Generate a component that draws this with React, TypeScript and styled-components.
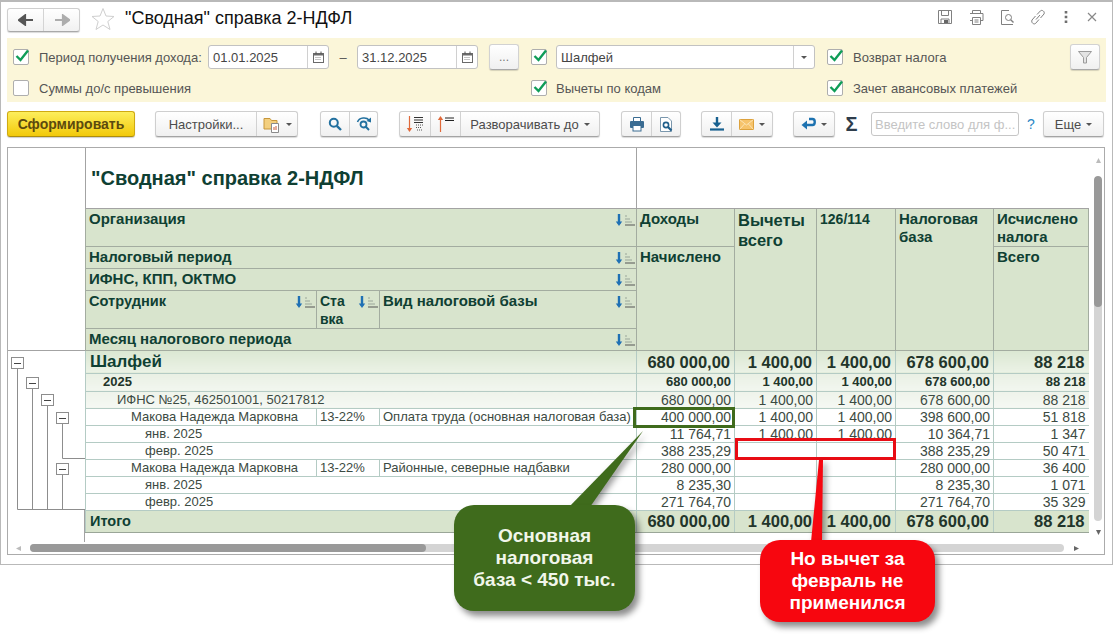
import * as React from "react";
import { FC, ReactNode } from "react";
import styled, { createGlobalStyle } from "styled-components";

const Global = createGlobalStyle`
  html, body { margin: 0; padding: 0; background: #fff; }
  body { font-family: "Liberation Sans", Arial, sans-serif; }
  * { box-sizing: border-box; }
`;

const Page = styled.div`
  position: relative;
  width: 1113px;
  height: 637px;
  overflow: hidden;
`;

const Window = styled.div`
  height: 565px;
  border: 1px solid #b9b9b9;
  border-top-width: 2px;
  padding: 0 6px;
`;

/* title bar */

const TitleBar = styled.div`
  display: flex;
  align-items: center;
  height: 36px;
  padding-bottom: 4px;
`;

const NavGroup = styled.div`
  display: flex;
  width: 73px;
  height: 24px;
  margin-top: 3px;
  background: linear-gradient(#ffffff, #f1f1f1);
  border: 1px solid #cfcfcf;
  border-bottom-color: #a9a9a9;
  border-radius: 3px;
  box-shadow: 0 1px 1px rgba(0, 0, 0, 0.15);
`;

const NavButton = styled.div`
  display: flex;
  align-items: center;
  justify-content: center;
  flex: 1;
  & + & { border-left: 1px solid #d4d4d4; }
`;

const StarBox = styled.div`
  display: flex;
  margin: 2px 10px 0 11px;
`;

const Title = styled.h1`
  margin: 0;
  font-size: 18px;
  font-weight: normal;
  color: #111;
  white-space: nowrap;
`;

const WindowTools = styled.div`
  display: flex;
  align-items: center;
  margin: 0 7px 2px auto;
  gap: 13px;
`;

/* filter panel */

const FilterPanel = styled.div`
  display: grid;
  grid-template-columns: 518px 296px 1fr;
  grid-template-rows: 26px 26px;
  row-gap: 5px;
  height: 64px;
  padding: 6px 6px 1px;
  background: #fbf6d9;
  font-size: 13px;
  color: #555;
`;

const FilterCell = styled.div`
  display: flex;
  align-items: center;
  white-space: nowrap;
`;

const CheckBoxBox = styled.span`
  display: flex;
  align-items: center;
  justify-content: center;
  flex: none;
  width: 16px;
  height: 16px;
  margin-right: 10px;
  background: #fff;
  border: 1px solid #aeaeae;
  border-radius: 2px;
`;

const CheckMark = styled.svg`
  margin-top: -3px;
  margin-right: -2px;
`;

const CheckBox: FC<{ checked?: boolean }> = ({ checked }) => (
  <CheckBoxBox>
    {checked && (
      <CheckMark width="16" height="16" viewBox="0 0 16 16">
        <path d="M2.5 8 L6.5 12 L14 2.5" fill="none" stroke="#0f9d58" strokeWidth="2.4" />
      </CheckMark>
    )}
  </CheckBoxBox>
);

const PeriodLabel = styled.span`
  flex: none;
  width: 169px;
`;

const CodesLabel = styled.span`
  margin-left: -1px;
`;

const Field = styled.div<{ $width: number }>`
  display: flex;
  align-items: center;
  width: ${props => props.$width}px;
  height: 24px;
  background: #fff;
  border: 1px solid #c2c2c2;
  border-radius: 3px;
  font-size: 13px;
  color: #444;
`;

const SelectField = styled(Field)`
  margin-left: -1px;
`;

const FieldText = styled.span`
  flex: 1;
  padding-left: 4px;
`;

const FieldAddon = styled.span`
  display: flex;
  align-items: center;
  justify-content: center;
  flex: none;
  width: 21px;
  height: 100%;
  border-left: 1px solid #d0d0d0;
`;

const Dash = styled.span`
  flex: none;
  width: 28px;
  text-align: center;
`;

const FlatButton = styled.div<{ $width: number; $height?: number }>`
  display: flex;
  align-items: center;
  justify-content: center;
  flex: none;
  width: ${props => props.$width}px;
  height: ${props => props.$height || 26}px;
  background: linear-gradient(#ffffff, #f0f0f0);
  border: 1px solid #d2d2d2;
  border-bottom-color: #a8a8a8;
  border-radius: 3px;
  box-shadow: 0 1px 1px rgba(0, 0, 0, 0.15);
  color: #777;
`;

const DotsButton = styled(FlatButton)`
  margin-left: 11px;
  font-size: 12px;
`;

const FilterButton = styled(FlatButton)`
  margin-left: auto;
`;

/* toolbar */

const Toolbar = styled.div`
  display: flex;
  align-items: center;
  height: 26px;
  margin-top: 9px;
  font-size: 13px;
  & > * { flex: none; }
`;

const PrimaryButton = styled.div`
  display: flex;
  align-items: center;
  justify-content: center;
  width: 128px;
  height: 26px;
  background: linear-gradient(#fdee5c, #f2c90a);
  border: 1px solid #cfaa12;
  border-bottom-color: #ad8d0c;
  border-radius: 3px;
  font-size: 14px;
  font-weight: bold;
  color: #5c4a0e;
  box-shadow: 0 1px 1px rgba(0, 0, 0, 0.2);
`;

const ToolGroup = styled.div<{ $left: number }>`
  display: flex;
  height: 26px;
  margin-left: ${props => props.$left}px;
  background: linear-gradient(#ffffff, #f0f0f0);
  border: 1px solid #cfcfcf;
  border-bottom-color: #a4a4a4;
  border-radius: 3px;
  box-shadow: 0 1px 1px rgba(0, 0, 0, 0.15);
  color: #4c4c4c;
`;

const ToolItem = styled.div<{ $width: number }>`
  display: flex;
  align-items: center;
  justify-content: center;
  gap: 5px;
  width: ${props => props.$width}px;
  white-space: nowrap;
  & + & { border-left: 1px solid #d2d2d2; }
`;

const Caret = styled.span`
  width: 0;
  height: 0;
  border-left: 3px solid transparent;
  border-right: 3px solid transparent;
  border-top: 3px solid #555;
`;

const Sigma = styled.span`
  margin-left: 7px;
  width: 19px;
  font-size: 20px;
  font-weight: bold;
  line-height: 24px;
  color: #2f3d4c;
  text-align: center;
`;

const FindInput = styled.div`
  width: 148px;
  height: 24px;
  margin-left: 10px;
  padding: 4px 0 0 3px;
  background: #fff;
  border: 1px solid #c6c6c6;
  border-radius: 3px;
  font-size: 13px;
  color: #c4c4c4;
  white-space: nowrap;
`;

const HelpMark = styled.span`
  width: 24px;
  text-align: center;
  font-size: 14px;
  color: #2a86c4;
`;

/* report */

const ReportFrame = styled.div`
  width: 1098px;
  height: 408px;
  margin-top: 10px;
  border: 1px solid #ababab;
`;

const ReportMain = styled.div`
  display: flex;
  height: 394px;
`;

const Gutter = styled.div`
  flex: none;
  width: 77px;
  display: flex;
  flex-direction: column;
`;

const GutterHead = styled.div`
  height: 202px;
`;

const Table = styled.table`
  flex: none;
  align-self: flex-start;
  width: 1003px;
  table-layout: fixed;
  border-collapse: collapse;
  color: #0f4033;
`;

const TitleCell = styled.td`
  height: 60px;
  padding: 2px 0 0 5px;
  background: #fff;
  border-left: 1px solid #a3a3a3;
  border-right: 1px solid #a3a3a3;
  border-bottom: 1px solid #a3a3a3;
  font-size: 20px;
  font-weight: bold;
  white-space: nowrap;
`;

const BlankCell = styled.td`
  background: #fff;
  border-bottom: 1px solid #a3a3a3;
`;

const HeadCell = styled.td<{ $size?: number; $height?: number; $line?: number }>`
  height: ${props => props.$height || 22}px;
  padding: 1px 1px 0 3px;
  background: #d8e4cd;
  border: 1px solid #a3aca0;
  vertical-align: top;
  font-size: ${props => props.$size || 15}px;
  font-weight: bold;
  line-height: ${props => props.$line || 18}px;
`;

const HeadInner = styled.div`
  display: flex;
  justify-content: space-between;
  white-space: nowrap;
`;

const SortMark = styled.svg`
  flex: none;
  margin-top: 3px;
`;

const SortIcon: FC = () => (
  <SortMark width="22" height="14" viewBox="0 0 22 14">
    <path d="M6 1 V11" stroke="#1f70b4" strokeWidth="2.4" />
    <path d="M2.8 8.5 L6 13 L9.2 8.5 Z" fill="#1f70b4" />
    <path d="M12 3 h2 M12 6 h5 M12 9 h7" stroke="#9aa69a" strokeWidth="1" />
    <path d="M12 12 h10" stroke="#555" strokeWidth="1" />
  </SortMark>
);

type Level = "group" | "year" | "ifns" | "plain" | "total";

const levelBackground: Record<Level, string> = {
  group: "linear-gradient(#dbe7d2, #ebf2e6)",
  year: "linear-gradient(#e9f0e4, #f2f6ef)",
  ifns: "linear-gradient(#eef3ea, #f5f8f3)",
  plain: "#fff",
  total: "#d8e4cd"
};

const levelFont: Record<Level, string> = {
  group: "bold 16.5px",
  year: "bold 13px",
  ifns: "13px",
  plain: "13px",
  total: "bold 16.5px"
};

const levelNumberFont: Record<Level, string> = {
  group: "bold 16.5px",
  year: "bold 13px",
  ifns: "14px",
  plain: "14px",
  total: "bold 16.5px"
};

const levelColor: Record<Level, string> = {
  group: "#22352a",
  year: "#22352a",
  ifns: "#3c4a42",
  plain: "#3c4a42",
  total: "#22352a"
};

const isLarge = (level: Level) => level === "group" || level === "total";

const Row = styled.tr<{ $height: number }>`
  height: ${props => props.$height}px;
`;

const Cell = styled.td<{ $level: Level; $indent?: number; $number?: boolean }>`
  padding: 0 ${props => (props.$number ? (isLarge(props.$level) ? 4 : 3) : 2)}px 0 ${props => props.$indent || 3}px;
  background: ${props => levelBackground[props.$level]};
  border-bottom: 1px solid ${props => (props.$level === "total" ? "#9aa698" : "#b4cbc4")};
  border-left: 1px solid #b4cbc4;
  font: ${props => (props.$number ? levelNumberFont : levelFont)[props.$level]} "Liberation Sans", Arial, sans-serif;
  color: ${props => levelColor[props.$level]};
  text-align: ${props => (props.$number ? "right" : "left")};
  line-height: 14px;
  white-space: nowrap;
`;

const GroupName = styled.span<{ $size: number }>`
  color: #0f4033;
  font-size: ${props => props.$size}px;
`;

const TotalName = styled(GroupName)`
  vertical-align: 1.5px;
`;

const VBar = styled.div`
  flex: none;
  width: 16px;
  display: flex;
  flex-direction: column;
  align-items: center;
  padding: 9px 0 0 2px;
`;

const VTrack = styled.div`
  width: 8px;
  height: 345px;
  margin: 12px 0 8px;
  background: #d4d4d4;
  border-radius: 4px;
  overflow: hidden;
`;

const VThumb = styled.div`
  height: 131px;
  background: #999;
  border-radius: 4px;
`;

const HBar = styled.div`
  display: flex;
  align-items: center;
  height: 12px;
  padding-left: 7px;
`;

const HTrack = styled.div`
  width: 1034px;
  height: 8px;
  margin: 0 9px 0 8px;
  background: #d4d4d4;
  border-radius: 4px;
`;

const HThumb = styled.div`
  width: 396px;
  height: 8px;
  background: #999;
  border-radius: 4px;
`;

const Triangle = styled.svg`
  flex: none;
`;

const Arrow: FC<{ points: string; color?: string }> = ({ points, color }) => (
  <Triangle width="7" height="7" viewBox="0 0 7 7">
    <polygon points={points} fill={color || "#777"} />
  </Triangle>
);

/* overlays */

const GreenHighlight = styled.div`
  position: absolute;
  left: 633px;
  top: 407px;
  width: 102px;
  height: 21px;
  border: 3px solid #3f6b1c;
`;

const RedHighlight = styled.div`
  position: absolute;
  left: 735px;
  top: 438px;
  width: 161px;
  height: 22px;
  border: 3px solid #e80c14;
`;

const Pointer = styled.svg`
  position: absolute;
  left: 0;
  top: 0;
  filter: drop-shadow(3px 3px 3px rgba(0, 0, 0, 0.4));
`;

const Callout = styled.div`
  position: absolute;
  display: flex;
  align-items: center;
  justify-content: center;
  border-radius: 20px;
  box-shadow: 4px 5px 6px rgba(0, 0, 0, 0.45);
  color: #fff;
  font-size: 19px;
  font-weight: bold;
  line-height: 22px;
  text-align: center;
  white-space: nowrap;
`;

const GreenCallout = styled(Callout)`
  left: 454px;
  top: 505px;
  width: 181px;
  height: 106px;
  background: #3f6b1c;
  color: #f1f6ea;
`;

const RedCallout = styled(Callout)`
  left: 760px;
  top: 540px;
  width: 175px;
  height: 82px;
  background: #f7060f;
`;

/* icons */

const Ico: FC<{ w?: number; h?: number; children: ReactNode }> = ({ w = 18, h = 18, children }) => (
  <svg width={w} height={h} viewBox={`0 0 ${w} ${h}`} fill="none">
    {children}
  </svg>
);

const NavArrow: FC<{ right?: boolean; color: string }> = ({ right, color }) => (
  <Ico w={16} h={12}>
    <path
      d={right ? "M1 6 H10 M9 1.5 V10.5 L15 6 Z" : "M15 6 H6 M7 1.5 V10.5 L1 6 Z"}
      stroke={color}
      strokeWidth="2.2"
      fill={color}
      strokeLinejoin="miter"
    />
  </Ico>
);

const CalendarIcon: FC = () => (
  <Ico w={11} h={12}>
    <rect x="0.5" y="2.5" width="10" height="9" fill="#fff" stroke="#6a6a6a" />
    <rect x="0.5" y="2" width="10" height="2.5" fill="#6a6a6a" />
    <path d="M3 0.5 V3 M8 0.5 V3" stroke="#555" />
    <path d="M2.5 6.5 h6 M2.5 8.5 h6" stroke="#888" strokeDasharray="1 1" />
  </Ico>
);

const SearchGlass: FC = () => (
  <Ico w={14} h={14}>
    <circle cx="5.8" cy="5.8" r="4" stroke="#22709f" strokeWidth="2" />
    <path d="M8.8 8.8 L13 13" stroke="#22709f" strokeWidth="2.4" />
  </Ico>
);

const App: FC = () => (
  <Page>
    <Global />
    <Window>
      <TitleBar>
        <NavGroup>
          <NavButton>
            <NavArrow color="#555" />
          </NavButton>
          <NavButton>
            <NavArrow right color="#adadad" />
          </NavButton>
        </NavGroup>
        <StarBox>
          <Ico w={24} h={24}>
            <polygon
              points="12,1.5 15,9 23,9.5 16.8,14.5 19,22.5 12,18 5,22.5 7.2,14.5 1,9.5 9,9"
              fill="#fff"
              stroke="#cfcfcf"
            />
          </Ico>
        </StarBox>
        <Title>"Сводная" справка 2-НДФЛ</Title>
        <WindowTools>
          <Ico>
            <path d="M2.5 2.5 H15.5 V15.5 H2.5 Z" stroke="#808080" />
            <path d="M5.5 2.5 V7.5 H12.5 V2.5 M5 15.5 V11 H13 V15.5" stroke="#808080" />
            <rect x="8" y="12" width="4" height="3" fill="#666" />
          </Ico>
          <Ico>
            <path d="M5.5 5 V2.5 H13.5 V5 M3 5.5 H16 V12.5 H14 M5 12.5 H3 Z" stroke="#808080" />
            <path d="M5.5 9.5 H13.5 V16.5 H5.5 Z M7.5 12 H11.5 M7.5 14 H11.5" stroke="#808080" />
          </Ico>
          <Ico>
            <path d="M11 2.5 H3.5 V16.5 H15" stroke="#808080" />
            <circle cx="10.5" cy="9.5" r="3" stroke="#808080" />
            <path d="M12.7 11.7 L15.5 14.5" stroke="#808080" strokeWidth="1.4" />
          </Ico>
          <Ico>
            <path
              d="M8 6.5 L11.5 2.8 C13 1.5 16.2 3.5 15 6 L11.5 10 M10 11.5 L6.5 15.5 C5 16.8 1.8 14.8 3 12 L6.5 8 M7 11.5 L11 7"
              stroke="#808080"
            />
          </Ico>
          <Ico w={12}>
            <path d="M6 3 v2.6 M6 7.7 v2.6 M6 12.4 v2.6" stroke="#6f6f6f" strokeWidth="2.6" />
          </Ico>
          <Ico w={14} h={14}>
            <path d="M3 3 L11 11 M11 3 L3 11" stroke="#888" strokeWidth="1.2" />
          </Ico>
        </WindowTools>
      </TitleBar>

      <FilterPanel>
        <FilterCell>
          <CheckBox checked />
          <PeriodLabel>Период получения дохода:</PeriodLabel>
          <Field $width={121}>
            <FieldText>01.01.2025</FieldText>
            <FieldAddon>
              <CalendarIcon />
            </FieldAddon>
          </Field>
          <Dash>–</Dash>
          <Field $width={121}>
            <FieldText>31.12.2025</FieldText>
            <FieldAddon>
              <CalendarIcon />
            </FieldAddon>
          </Field>
          <DotsButton $width={30}>...</DotsButton>
        </FilterCell>
        <FilterCell>
          <CheckBox checked />
          <SelectField $width={259}>
            <FieldText>Шалфей</FieldText>
            <FieldAddon>
              <Caret />
            </FieldAddon>
          </SelectField>
        </FilterCell>
        <FilterCell>
          <CheckBox checked />
          <span>Возврат налога</span>
          <FilterButton $width={30}>
            <Ico w={16} h={16}>
              <path d="M1.5 2.5 H14.5 L9.5 8.5 V14 H6.5 V8.5 Z" fill="#e4e4e4" stroke="#9b9b9b" />
            </Ico>
          </FilterButton>
        </FilterCell>
        <FilterCell>
          <CheckBox />
          <span>Суммы до/с превышения</span>
        </FilterCell>
        <FilterCell>
          <CheckBox checked />
          <CodesLabel>Вычеты по кодам</CodesLabel>
        </FilterCell>
        <FilterCell>
          <CheckBox checked />
          <span>Зачет авансовых платежей</span>
        </FilterCell>
      </FilterPanel>

      <Toolbar>
        <PrimaryButton>Сформировать</PrimaryButton>
        <ToolGroup $left={20}>
          <ToolItem $width={100}>Настройки...</ToolItem>
          <ToolItem $width={41}>
            <Ico w={18} h={18}>
              <path d="M1 3.5 H7 L8.5 5.5 H14 V14 H1 Z" fill="#f3cf7e" stroke="#c7963a" />
              <path d="M8.5 8.5 H15.5 V17.5 H8.5 Z" fill="#fff" stroke="#8a8a8a" />
              <path d="M11 15 V12 M13 15 V11" stroke="#c85a3a" />
            </Ico>
            <Caret />
          </ToolItem>
        </ToolGroup>
        <ToolGroup $left={22}>
          <ToolItem $width={28}>
            <SearchGlass />
          </ToolItem>
          <ToolItem $width={28}>
            <Ico w={16} h={16}>
              <path d="M1.5 6 C3.5 1 10.5 1 13 4" stroke="#22709f" strokeWidth="1.6" />
              <polygon points="15,1.5 15,6.5 10.5,5" fill="#22709f" />
              <circle cx="7.5" cy="8.5" r="3" stroke="#22709f" strokeWidth="1.8" />
              <path d="M9.8 10.8 L13 14" stroke="#22709f" strokeWidth="2" />
            </Ico>
          </ToolItem>
        </ToolGroup>
        <ToolGroup $left={21}>
          <ToolItem $width={30}>
            <Ico w={18} h={18}>
              <path d="M3.5 1 V14" stroke="#e0693a" strokeWidth="1.2" />
              <polygon points="0.8,13 6.2,13 3.5,17" fill="#e0693a" />
              <path d="M8 2.5 h9 M8 5 h9 M8 7.5 h9" stroke="#333" />
              <path d="M10 10 h7 M10 12.5 h6 M11 15 h5" stroke="#555" strokeDasharray="1 1" />
            </Ico>
          </ToolItem>
          <ToolItem $width={30}>
            <Ico w={18} h={18}>
              <path d="M3.5 4 V17" stroke="#e0693a" strokeWidth="1.2" />
              <polygon points="0.8,5 6.2,5 3.5,1" fill="#e0693a" />
              <path d="M8 3 h9 M8 5.5 h9" stroke="#222" strokeWidth="1.2" />
            </Ico>
          </ToolItem>
          <ToolItem $width={139}>
            Разворачивать до <Caret />
          </ToolItem>
        </ToolGroup>
        <ToolGroup $left={21}>
          <ToolItem $width={29}>
            <Ico w={16} h={16}>
              <path d="M4.5 5 V1.5 H11.5 V5" stroke="#3a6c92" fill="#fff" />
              <rect x="1" y="5" width="14" height="7" rx="1" fill="#3a6c92" />
              <rect x="4" y="9.5" width="8" height="5.5" fill="#fff" stroke="#3a6c92" />
            </Ico>
          </ToolItem>
          <ToolItem $width={29}>
            <Ico w={16} h={16}>
              <path d="M10 1.5 H2.5 V15.5 H13.5 V5 Z" stroke="#7a97ad" fill="#fff" />
              <circle cx="8" cy="9" r="2.6" stroke="#1f5f8b" strokeWidth="1.6" />
              <path d="M10 11 L13.5 14.5" stroke="#1f5f8b" strokeWidth="2.2" />
            </Ico>
          </ToolItem>
        </ToolGroup>
        <ToolGroup $left={20}>
          <ToolItem $width={29}>
            <Ico w={16} h={16}>
              <path d="M8 1 V8" stroke="#17608f" strokeWidth="2.4" />
              <polygon points="3.5,6.5 12.5,6.5 8,11.5" fill="#17608f" />
              <path d="M1 13.5 H15" stroke="#17608f" strokeWidth="2.2" />
            </Ico>
          </ToolItem>
          <ToolItem $width={41}>
            <Ico w={15} h={11}>
              <rect x="0.5" y="0.5" width="14" height="10" fill="#f6c36b" stroke="#dda23d" />
              <path d="M0.5 0.5 L7.5 6 L14.5 0.5 M0.5 10.5 L5.5 5 M14.5 10.5 L9.5 5" stroke="#fbe3b4" />
            </Ico>
            <Caret />
          </ToolItem>
        </ToolGroup>
        <ToolGroup $left={20}>
          <ToolItem $width={40}>
            <Ico w={15} h={14}>
              <path d="M8 2 H11.5 C14.5 2 14.5 8 11.5 8 H5" stroke="#1d72b0" strokeWidth="2.4" />
              <polygon points="6,3.5 6,12.5 0.5,8" fill="#1d72b0" />
            </Ico>
            <Caret />
          </ToolItem>
        </ToolGroup>
        <Sigma>Σ</Sigma>
        <FindInput>Введите слово для ф...</FindInput>
        <HelpMark>?</HelpMark>
        <ToolGroup $left={0}>
          <ToolItem $width={59}>
            Еще <Caret />
          </ToolItem>
        </ToolGroup>
      </Toolbar>

      <ReportFrame>
        <ReportMain>
          <Gutter>
            <GutterHead />
            <svg width="77" height="192" viewBox="0 0 77 192" fill="none">
              <path d="M0 0.5 H77" stroke="#a3a3a3" />
              <g stroke="#8d8d8d">
                <path d="M9.5 18 V159.5 H77" />
                <path d="M24.5 38 V159.5" />
                <path d="M39.5 56 V159.5" />
                <path d="M54.5 73 V108.5 H77" />
                <path d="M54.5 124 V159.5" />
              </g>
              <g fill="#fff" stroke="#8d8d8d">
                <rect x="3.5" y="7.5" width="12" height="11" />
                <rect x="18.5" y="27.5" width="12" height="11" />
                <rect x="33.5" y="44.5" width="12" height="11" />
                <rect x="48.5" y="62.5" width="12" height="11" />
                <rect x="48.5" y="113.5" width="12" height="11" />
              </g>
              <path
                d="M6 13.5 H13 M21 33.5 H28 M36 50.5 H43 M51 68.5 H58 M51 119.5 H58"
                stroke="#444"
              />
              <path d="M76.5 160 V192" stroke="#a3a3a3" />
            </svg>
          </Gutter>

          <Table>
            <colgroup>
              <col width="231" />
              <col width="63" />
              <col width="257" />
              <col width="98" />
              <col width="82" />
              <col width="79" />
              <col width="98" />
              <col width="95" />
            </colgroup>
            <tbody>
              <tr>
                <TitleCell colSpan={3}>"Сводная" справка 2-НДФЛ</TitleCell>
                <BlankCell colSpan={5} />
              </tr>
              <tr>
                <HeadCell colSpan={3} $height={38}>
                  <HeadInner>
                    Организация <SortIcon />
                  </HeadInner>
                </HeadCell>
                <HeadCell>Доходы</HeadCell>
                <HeadCell rowSpan={5} $size={16.5} $line={20}>
                  Вычеты всего
                </HeadCell>
                <HeadCell rowSpan={5} $size={14}>
                  126/114
                </HeadCell>
                <HeadCell rowSpan={5}>Налоговая база</HeadCell>
                <HeadCell>Исчислено налога</HeadCell>
              </tr>
              <tr>
                <HeadCell colSpan={3}>
                  <HeadInner>
                    Налоговый период <SortIcon />
                  </HeadInner>
                </HeadCell>
                <HeadCell rowSpan={4}>Начислено</HeadCell>
                <HeadCell rowSpan={4}>Всего</HeadCell>
              </tr>
              <tr>
                <HeadCell colSpan={3}>
                  <HeadInner>
                    ИФНС, КПП, ОКТМО <SortIcon />
                  </HeadInner>
                </HeadCell>
              </tr>
              <tr>
                <HeadCell $height={38} $size={14.6}>
                  <HeadInner>
                    Сотрудник <SortIcon />
                  </HeadInner>
                </HeadCell>
                <HeadCell $size={14}>
                  <HeadInner>
                    <span>
                      Ста
                      <br />
                      вка
                    </span>
                    <SortIcon />
                  </HeadInner>
                </HeadCell>
                <HeadCell>
                  <HeadInner>
                    Вид налоговой базы <SortIcon />
                  </HeadInner>
                </HeadCell>
              </tr>
              <tr>
                <HeadCell colSpan={3}>
                  <HeadInner>
                    Месяц налогового периода <SortIcon />
                  </HeadInner>
                </HeadCell>
              </tr>

              <Row $height={23}>
                <Cell $level="group" colSpan={3} $indent={4}>
                  <GroupName $size={17}>Шалфей</GroupName>
                </Cell>
                <Cell $level="group" $number>680 000,00</Cell>
                <Cell $level="group" $number>1 400,00</Cell>
                <Cell $level="group" $number>1 400,00</Cell>
                <Cell $level="group" $number>678 600,00</Cell>
                <Cell $level="group" $number>88 218</Cell>
              </Row>
              <Row $height={18}>
                <Cell $level="year" colSpan={3} $indent={17}>2025</Cell>
                <Cell $level="year" $number>680 000,00</Cell>
                <Cell $level="year" $number>1 400,00</Cell>
                <Cell $level="year" $number>1 400,00</Cell>
                <Cell $level="year" $number>678 600,00</Cell>
                <Cell $level="year" $number>88 218</Cell>
              </Row>
              <Row $height={17}>
                <Cell $level="ifns" colSpan={3} $indent={31}>ИФНС №25, 462501001, 50217812</Cell>
                <Cell $level="ifns" $number>680 000,00</Cell>
                <Cell $level="ifns" $number>1 400,00</Cell>
                <Cell $level="ifns" $number>1 400,00</Cell>
                <Cell $level="ifns" $number>678 600,00</Cell>
                <Cell $level="ifns" $number>88 218</Cell>
              </Row>
              <Row $height={17}>
                <Cell $level="plain" $indent={45}>Макова Надежда Марковна</Cell>
                <Cell $level="plain">13-22%</Cell>
                <Cell $level="plain">Оплата труда (основная налоговая база)</Cell>
                <Cell $level="plain" $number>400 000,00</Cell>
                <Cell $level="plain" $number>1 400,00</Cell>
                <Cell $level="plain" $number>1 400,00</Cell>
                <Cell $level="plain" $number>398 600,00</Cell>
                <Cell $level="plain" $number>51 818</Cell>
              </Row>
              <Row $height={17}>
                <Cell $level="plain" colSpan={3} $indent={59}>янв. 2025</Cell>
                <Cell $level="plain" $number>11 764,71</Cell>
                <Cell $level="plain" $number>1 400,00</Cell>
                <Cell $level="plain" $number>1 400,00</Cell>
                <Cell $level="plain" $number>10 364,71</Cell>
                <Cell $level="plain" $number>1 347</Cell>
              </Row>
              <Row $height={17}>
                <Cell $level="plain" colSpan={3} $indent={59}>февр. 2025</Cell>
                <Cell $level="plain" $number>388 235,29</Cell>
                <Cell $level="plain" $number />
                <Cell $level="plain" $number />
                <Cell $level="plain" $number>388 235,29</Cell>
                <Cell $level="plain" $number>50 471</Cell>
              </Row>
              <Row $height={17}>
                <Cell $level="plain" $indent={45}>Макова Надежда Марковна</Cell>
                <Cell $level="plain">13-22%</Cell>
                <Cell $level="plain">Районные, северные надбавки</Cell>
                <Cell $level="plain" $number>280 000,00</Cell>
                <Cell $level="plain" $number />
                <Cell $level="plain" $number />
                <Cell $level="plain" $number>280 000,00</Cell>
                <Cell $level="plain" $number>36 400</Cell>
              </Row>
              <Row $height={17}>
                <Cell $level="plain" colSpan={3} $indent={59}>янв. 2025</Cell>
                <Cell $level="plain" $number>8 235,30</Cell>
                <Cell $level="plain" $number />
                <Cell $level="plain" $number />
                <Cell $level="plain" $number>8 235,30</Cell>
                <Cell $level="plain" $number>1 071</Cell>
              </Row>
              <Row $height={17}>
                <Cell $level="plain" colSpan={3} $indent={59}>февр. 2025</Cell>
                <Cell $level="plain" $number>271 764,70</Cell>
                <Cell $level="plain" $number />
                <Cell $level="plain" $number />
                <Cell $level="plain" $number>271 764,70</Cell>
                <Cell $level="plain" $number>35 329</Cell>
              </Row>
              <Row $height={22}>
                <Cell $level="total" colSpan={3} $indent={4}>
                  <TotalName $size={14.5}>Итого</TotalName>
                </Cell>
                <Cell $level="total" $number>680 000,00</Cell>
                <Cell $level="total" $number>1 400,00</Cell>
                <Cell $level="total" $number>1 400,00</Cell>
                <Cell $level="total" $number>678 600,00</Cell>
                <Cell $level="total" $number>88 218</Cell>
              </Row>
            </tbody>
          </Table>

          <VBar>
            <Arrow points="3.5,1 6,6 1,6" color="#bbb" />
            <VTrack>
              <VThumb />
            </VTrack>
            <Arrow points="1,1 6,1 3.5,6" color="#666" />
          </VBar>
        </ReportMain>
        <HBar>
          <Arrow points="6,1 6,6 1,3.5" color="#bbb" />
          <HTrack>
            <HThumb />
          </HTrack>
          <Arrow points="1,1 1,6 6,3.5" color="#666" />
        </HBar>
      </ReportFrame>
    </Window>

    <GreenHighlight />
    <RedHighlight />
    <Pointer width="1113" height="637" viewBox="0 0 1113 637">
      <polygon points="569,507 590,507 643,431" fill="#3f6b1c" />
      <polygon points="819,460 823,460 822,542 811,542" fill="#f7060f" />
    </Pointer>
    <GreenCallout>
      Основная
      <br />
      налоговая
      <br />
      база &lt; 450 тыс.
    </GreenCallout>
    <RedCallout>
      Но вычет за
      <br />
      февраль не
      <br />
      применился
    </RedCallout>
  </Page>
);

export default App;
